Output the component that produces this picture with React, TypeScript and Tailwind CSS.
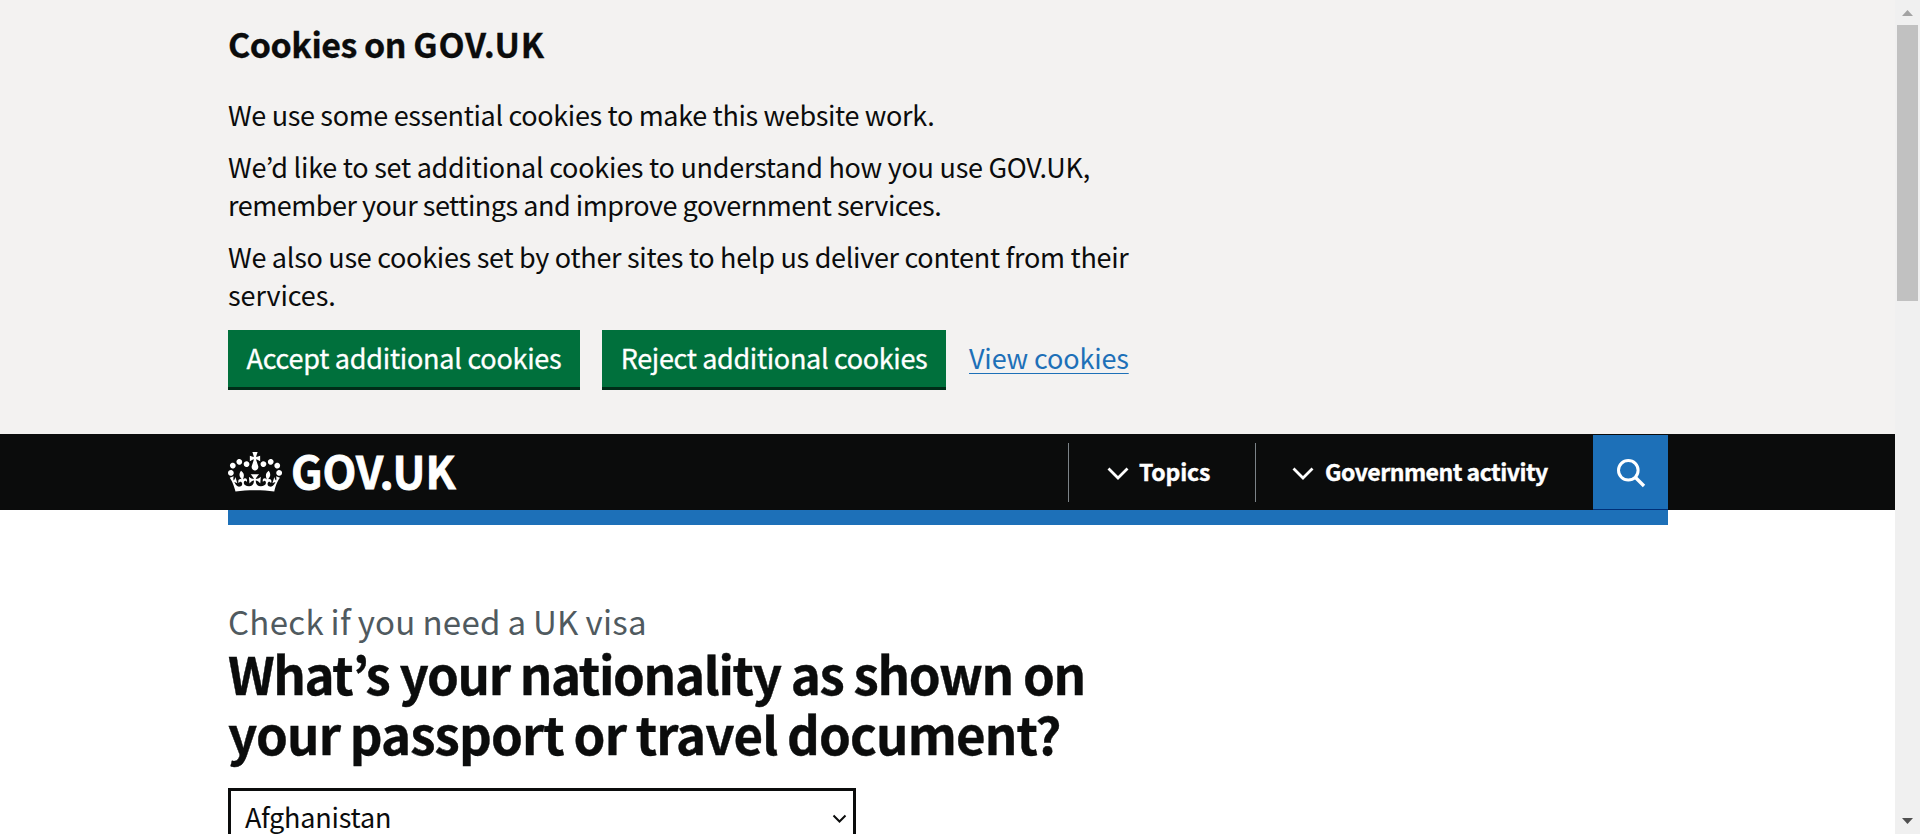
function Crown() {
  return (
    <svg className="h-[40px] w-[54px] shrink-0" viewBox="0 0 132 97" preserveAspectRatio="none" fill="currentColor" aria-hidden="true">
      <path
        fillRule="evenodd"
        d="M25 30.2c3.5 1.5 7.7-.2 9.1-3.7 1.5-3.6-.2-7.8-3.9-9.2-3.6-1.4-7.6.3-9.1 3.9-1.4 3.5.3 7.5 3.9 9zM9 39.5c3.6 1.5 7.8-.2 9.2-3.7 1.5-3.6-.2-7.8-3.9-9.1-3.6-1.5-7.6.2-9.1 3.8-1.4 3.5.3 7.5 3.8 9zM4.4 57.2c3.5 1.5 7.7-.2 9.1-3.8 1.5-3.6-.2-7.7-3.9-9.1-3.5-1.5-7.6.3-9.1 3.8-1.4 3.5.3 7.6 3.9 9.1zm38.3-21.4c3.5 1.5 7.7-.2 9.1-3.8 1.5-3.6-.2-7.7-3.9-9.1-3.6-1.5-7.6.3-9.1 3.8-1.3 3.6.4 7.7 3.9 9.1zm64.4-5.6c-3.6 1.5-7.8-.2-9.1-3.7-1.5-3.6.2-7.8 3.8-9.2 3.6-1.4 7.7.3 9.2 3.9 1.3 3.5-.4 7.5-3.9 9zm15.9 9.3c-3.6 1.5-7.7-.2-9.1-3.7-1.5-3.6.2-7.8 3.7-9.1 3.6-1.5 7.7.2 9.2 3.8 1.5 3.5-.3 7.5-3.8 9zm4.7 17.7c-3.6 1.5-7.8-.2-9.2-3.8-1.5-3.6.2-7.7 3.9-9.1 3.6-1.5 7.7.3 9.2 3.8 1.3 3.5-.4 7.6-3.9 9.1zM89.3 35.8c-3.6 1.5-7.8-.2-9.2-3.8-1.4-3.6.2-7.7 3.9-9.1 3.6-1.5 7.7.3 9.2 3.8 1.4 3.6-.3 7.7-3.9 9.1zM69.7 17.7l8.9 4.7V9.3l-8.9 2.8c-.2-.3-.5-.6-.9-.9L72.4 0H59.6l3.5 11.2c-.3.3-.6.5-.9.9l-8.8-2.8v13.1l8.8-4.7c.3.3.6.7.9.9l-5 15.4v.1c-.2.8-.4 1.6-.4 2.4 0 4.1 3.1 7.5 7 8.1h.2c.3 0 .7.1 1 .1.4 0 .7 0 1-.1h.2c4-.6 7.1-4.1 7.1-8.1 0-.8-.1-1.7-.4-2.4V34l-5.1-15.4c.4-.2.7-.6 1-.9zM66 92.8c16.9 0 32.8 1.1 47.1 3.2 4-16.9 8.9-26.7 14-33.5l-9.6-3.4c1 4.9 1.1 7.2 0 10.2-1.5-1.4-3-4.3-4.2-8.7L108.6 76c2.8-2 5-3.2 7.5-3.3-4.4 9.4-10 11.9-13.6 11.2-4.3-.8-6.3-4.6-5.6-7.9 1-4.7 5.7-5.9 8-.5 4.3-8.7-3-11.4-7.6-8.8 7.1-7.2 7.9-13.5 2.1-21.1-8 6.1-8.1 12.3-4.5 20.8-4.7-5.4-12.1-2.5-9.5 6.2 3.4-5.2 7.9-2 7.2 3.1-.6 4.3-6.4 7.8-13.5 7.2-10.3-.9-10.9-8-11.2-13.8 2.5-.5 7.1 1.8 11 7.3L80.2 60c-4.1 4.4-8 5.3-12.3 5.4 1.4-4.4 8-11.6 8-11.6H55.5s6.4 7.2 7.9 11.6c-4.2-.1-8-1-12.3-5.4l1.4 16.4c3.9-5.5 8.5-7.7 10.9-7.3-.3 5.8-.9 12.8-11.1 13.8-7.2.6-12.9-2.9-13.5-7.2-.7-5 3.8-8.3 7.1-3.1 2.7-8.7-4.6-11.6-9.4-6.2 3.7-8.5 3.6-14.7-4.6-20.8-5.8 7.6-5 13.9 2.2 21.1-4.7-2.6-11.9.1-7.7 8.8 2.3-5.5 7.1-4.2 8.1.5.7 3.3-1.3 7.1-5.7 7.9-3.5.7-9-1.8-13.5-11.2 2.5.1 4.7 1.3 7.5 3.3l-4.7-15.4c-1.2 4.4-2.7 7.2-4.3 8.7-1.1-3-.9-5.3 0-10.2l-9.5 3.4c5 6.9 9.9 16.7 14 33.5 14.8-2.1 30.8-3.2 47.7-3.2z"
      />
    </svg>
  );
}

function NavChevron() {
  return (
    <svg className="mt-[3px] h-[14px] w-[22px] shrink-0" viewBox="0 0 22 14" fill="none" stroke="currentColor" strokeWidth="2.8" aria-hidden="true">
      <path d="M1.5 1.5 11 11 20.5 1.5" />
    </svg>
  );
}

function CookieBanner() {
  return (
    <section className="h-[434px] bg-[#f3f2f1] pt-[23px] pl-[228px]" aria-label="Cookies on GOV.UK">
      <h2 className="text-[34px] leading-[42px] font-bold tracking-[-0.5px] [-webkit-text-stroke:0.3px]">
        Cookies on <span className="tracking-[0.7px]">GOV.UK</span>
      </h2>
      <div className="mt-[31px] flex flex-col gap-[14.5px] text-[27px] leading-[37.7px] whitespace-nowrap">
        <p className="tracking-[-0.34px]">We use some essential cookies to make this website work.</p>
        <p>
          <span className="block tracking-[-0.26px]">We’d like to set additional cookies to understand how you use GOV.UK,</span>
          <span className="block tracking-[-0.48px]">remember your settings and improve government services.</span>
        </p>
        <p>
          <span className="block tracking-[-0.29px]">We also use cookies set by other sites to help us deliver content from their</span>
          <span className="block tracking-[-0.1px]">services.</span>
        </p>
      </div>
      <div className="mt-[16.5px] flex text-[27px] leading-[55px] whitespace-nowrap">
        <button className="h-[60px] w-[352px] border-b-[3px] border-[#002d18] bg-[#00703c] pb-[2px] tracking-[-0.26px] text-white [-webkit-text-stroke:0.3px]">Accept additional cookies</button>
        <button className="ml-[22px] h-[60px] w-[344px] border-b-[3px] border-[#002d18] bg-[#00703c] pb-[2px] tracking-[-0.34px] text-white [-webkit-text-stroke:0.3px]">Reject additional cookies</button>
        <a className="ml-[23px] tracking-[-0.15px] text-[#1d70b8] underline decoration-1 underline-offset-[4px]" href="#cookies">View cookies</a>
      </div>
    </section>
  );
}

function Header() {
  return (
    <header>
      <div className="h-[76px] bg-[#0b0c0c] pl-[228px] text-white">
        <div className="flex h-full w-[1440px] whitespace-nowrap">
          <a href="#home" className="flex items-start pt-[18px]">
            <Crown />
            <span className="-mt-[7px] ml-[9px] text-[44px] leading-[50px] font-bold [-webkit-text-stroke:0.8px]">GOV.UK</span>
          </a>
          <nav className="ml-auto flex pt-[9px] text-[23px] font-bold [-webkit-text-stroke:0.4px]">
            <button className="flex h-[59px] w-[187px] items-center border-l border-[#7c8388] pl-[38px]">
              <NavChevron />
              <span className="-mt-[3px] ml-[10px] leading-[30px] tracking-[-0.15px]">Topics</span>
            </button>
            <button className="flex h-[59px] w-[338px] items-center border-l border-[#7c8388] pl-[36px]">
              <NavChevron />
              <span className="-mt-[3px] ml-[11px] leading-[30px] tracking-[-0.5px]">Government activity</span>
            </button>
          </nav>
          <button className="mt-px flex h-[75px] w-[75px] border-b border-[#003078] bg-[#1d70b8] pt-[23px] pl-[23px]" aria-label="Search">
            <svg className="h-[30px] w-[30px]" viewBox="0 0 30 30" fill="none" stroke="currentColor" strokeWidth="3" aria-hidden="true">
              <circle cx="12.3" cy="12.3" r="9.8" />
              <path d="m19 19 9 9" strokeWidth="3.4" />
            </svg>
          </button>
        </div>
      </div>
      <div className="ml-[228px] h-[15px] w-[1440px] bg-[#1d70b8]" />
    </header>
  );
}

function Question() {
  return (
    <main className="pt-[76px] pl-[228px] whitespace-nowrap">
      <span className="block text-[33px] leading-[41px] tracking-[0.3px] text-[#505a5f] [word-spacing:-1px]">Check if you need a UK visa</span>
      <h1 className="mt-px text-[51px] leading-[60px] font-bold [-webkit-text-stroke:0.4px]">
        <span className="block tracking-[-1.37px]">What’s your nationality as shown on</span>
        <span className="block tracking-[-0.88px] [word-spacing:-1px]">your passport or travel document?</span>
      </h1>
      <div className="mt-[25px] flex h-[60px] w-[628px] items-start justify-between border-[3px] border-[#0b0c0c] pr-[6px] pl-[14px] text-[27px]">
        <span className="pt-[6px] leading-[40px] tracking-[-0.2px]">Afghanistan</span>
        <svg className="mt-[23px] h-[10px] w-[15px]" viewBox="0 0 15 10" fill="none" stroke="currentColor" strokeWidth="2" aria-hidden="true">
          <path d="m1.5 1.5 6 6 6-6" />
        </svg>
      </div>
    </main>
  );
}

function ScrollTrack() {
  return (
    <div className="flex w-[25px] flex-col items-center bg-[#f0f0f0]">
      <svg className="mt-[10px] h-[6px] w-[11px] shrink-0" viewBox="0 0 11 6" fill="#a3a3a3" aria-hidden="true">
        <path d="M0 6 5.5 0 11 6z" />
      </svg>
      <div className="mt-[9px] h-[276px] w-[21px] bg-[#c1c1c1]" />
      <svg className="mt-auto mb-[10px] h-[6px] w-[11px] shrink-0" viewBox="0 0 11 6" fill="#505050" aria-hidden="true">
        <path d="M0 0 5.5 6 11 0z" />
      </svg>
    </div>
  );
}

export default function App() {
  return (
    <div className="flex h-[834px] w-[1920px] overflow-hidden bg-white font-['Noto_Sans_CJK_JP','Noto_Sans',sans-serif] text-[#0b0c0c]">
      <div className="w-[1895px]">
        <CookieBanner />
        <Header />
        <Question />
      </div>
      <ScrollTrack />
    </div>
  );
}
